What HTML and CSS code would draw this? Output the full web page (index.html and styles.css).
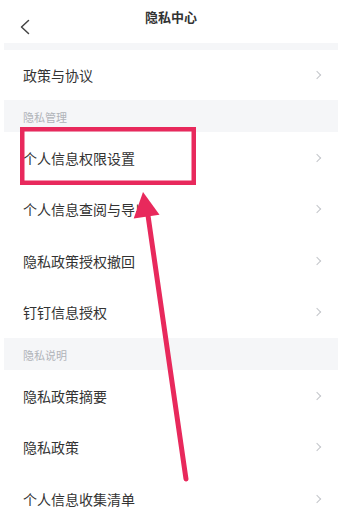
FILE: index.html
```html
<!DOCTYPE html>
<html lang="zh-CN">
<head>
    <meta charset="UTF-8">
    <meta name="viewport" content="width=device-width, initial-scale=1.0">
    <title>隐私中心</title>
    <link rel="stylesheet" href="styles.css">
</head>
<body>
    <div class="page">
        <div class="header">
            <a href="#" class="back">
                <svg width="12" height="16" viewBox="0 0 12 16"><path d="M9.5 1.5 L2.5 8 L9.5 14.5" fill="none" stroke="#444" stroke-width="1.5" stroke-linecap="round" stroke-linejoin="round"/></svg>
            </a>
            <h1>隐私中心</h1>
        </div>

        <div class="gap"></div>
        <a href="#" class="row first">政策与协议<span class="arrow"></span></a>

        <!-- 隐私管理 -->
        <div class="section">隐私管理</div>
        <a href="#" class="row">个人信息权限设置<span class="arrow"></span></a>
        <a href="#" class="row">个人信息查阅与导出<span class="arrow"></span></a>
        <a href="#" class="row">隐私政策授权撤回<span class="arrow"></span></a>
        <a href="#" class="row">钉钉信息授权<span class="arrow"></span></a>

        <!-- 隐私说明 -->
        <div class="section">隐私说明</div>
        <a href="#" class="row">隐私政策摘要<span class="arrow"></span></a>
        <a href="#" class="row">隐私政策<span class="arrow"></span></a>
        <a href="#" class="row">个人信息收集清单<span class="arrow"></span></a>

        <!-- annotation drawn over the list -->
        <svg class="markup" width="342" height="532" viewBox="0 0 342 532">
            <rect x="22.25" y="129.25" width="171.5" height="53.5" fill="none" stroke="#e8295c" stroke-width="4.5"/>
            <line x1="186" y1="479" x2="147.5" y2="212" stroke="#e8295c" stroke-width="5" stroke-linecap="round"/>
            <polygon points="143,192 159.5,214.8 133.7,218.6" fill="#e8295c"/>
        </svg>
    </div>
</body>
</html>
```

FILE: styles.css
```css
body {
    margin: 0;
    padding: 0;
    background-color: #fff;
    font-family: "Noto Sans CJK SC", "Noto Sans", sans-serif;
}

.page {
    position: relative;
    width: 342px;
    height: 532px;
    overflow: hidden;
}

.header {
    height: 43px;
    position: relative;
    display: flex;
    justify-content: center;
}
.header h1 {
    margin: 0;
    padding-top: 7px;
    font-size: 13px;
    font-weight: 700;
    color: #333;
    line-height: 20px;
}
.back {
    position: absolute;
    left: 19px;
    top: 19px;
    display: flex;
}

.gap {
    height: 7px;
    margin: 0 4px;
    background-color: #f5f6f8;
}

.section {
    height: 32px;
    margin: 0 4px;
    padding-left: 19px;
    background-color: #f5f6f8;
    color: #b0b3b8;
    font-size: 11px;
    line-height: 34px;
}

.row {
    height: 51.5px;
    display: flex;
    align-items: center;
    justify-content: space-between;
    padding: 0 20px 0 23px;
    font-size: 14px;
    color: #333;
    text-decoration: none;
}
.row.first {
    height: 50px;
}
.arrow {
    width: 5px;
    height: 5px;
    border-top: 1.2px solid #c4c6ca;
    border-right: 1.2px solid #c4c6ca;
    transform: rotate(45deg);
    margin-right: 2px;
}

.markup {
    position: absolute;
    left: 0;
    top: 0;
    pointer-events: none;
}
```
